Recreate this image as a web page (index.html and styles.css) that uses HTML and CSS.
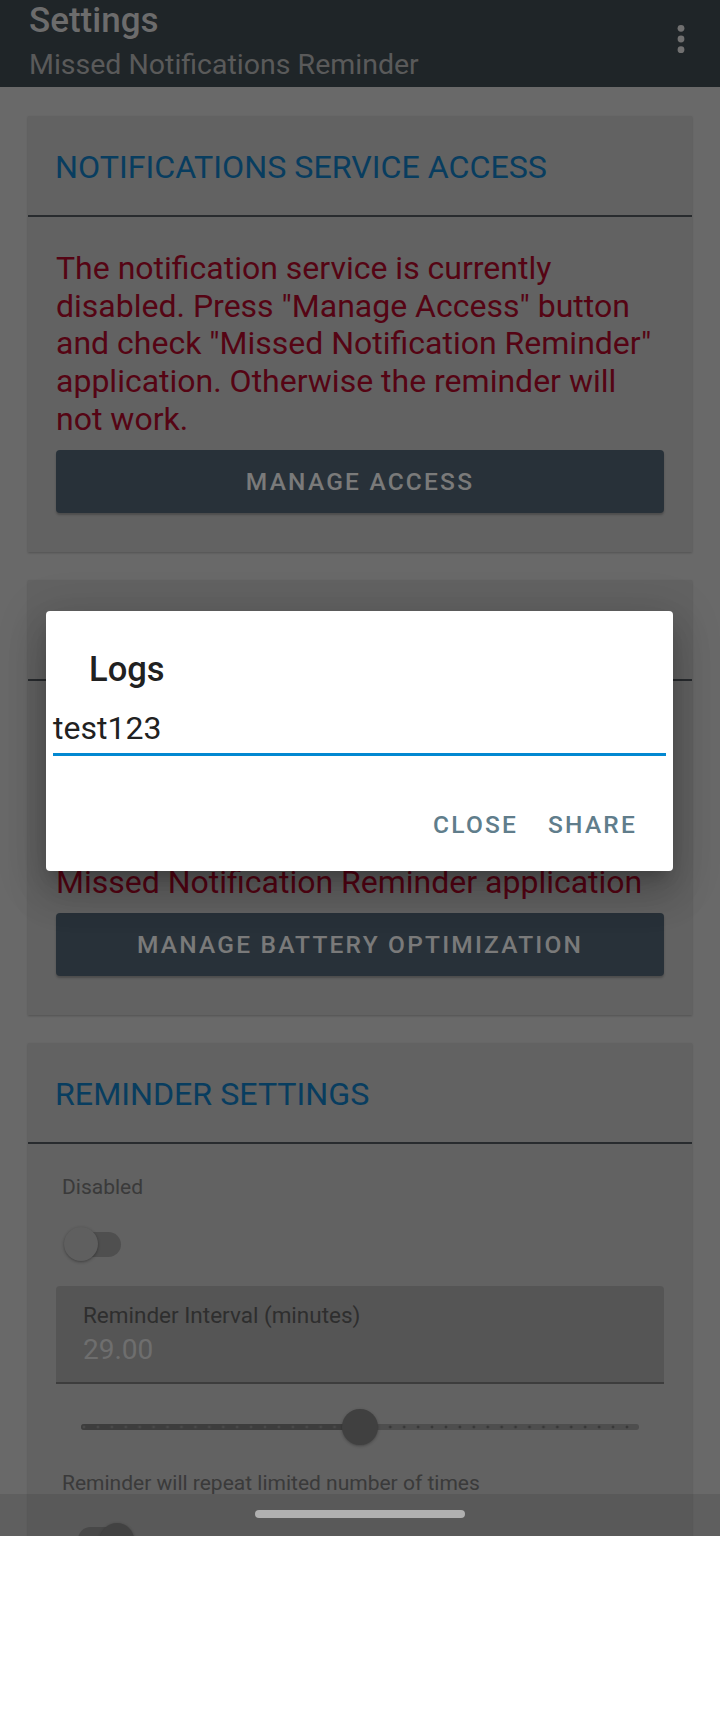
FILE: index.html
```html
<!DOCTYPE html>
<html lang="en">
<head>
<meta charset="utf-8">
<title>Settings</title>
<link rel="stylesheet" href="styles.css">
</head>
<body>
<div class="screen">
  <header class="appbar">
    <div class="appbar-text">
      <div class="appbar-title">Settings</div>
      <div class="appbar-subtitle">Missed Notifications Reminder</div>
    </div>
    <svg class="overflow" width="24" height="87" viewBox="0 0 24 87" aria-hidden="true">
      <circle cx="12" cy="28.3" r="3.4"/>
      <circle cx="12" cy="39" r="3.4"/>
      <circle cx="12" cy="49.7" r="3.4"/>
    </svg>
  </header>

  <main class="content">
    <section class="card">
      <div class="card-head"><h2 class="card-title">NOTIFICATIONS SERVICE ACCESS</h2></div>
      <div class="card-body">
        <p class="warning">The notification service is currently disabled. Press "Manage Access" button and check "Missed Notification Reminder" application. Otherwise the reminder will not work.</p>
        <button class="btn">Manage Access</button>
      </div>
    </section>

    <section class="card">
      <div class="card-head"><h2 class="card-title">BATTERY OPTIMIZATION</h2></div>
      <div class="card-body">
        <p class="warning">The battery optimization is currently<br>enabled and may stop the reminder.<br>Press "Manage Battery Optimization"<br>button and disable optimization for<br>Missed Notification Reminder application</p>
        <button class="btn">Manage Battery Optimization</button>
      </div>
    </section>

    <section class="card">
      <div class="card-head"><h2 class="card-title">REMINDER SETTINGS</h2></div>
      <div class="card-body settings">
        <div class="pref-label">Disabled</div>
        <div class="switch"><span class="track"></span><span class="thumb"></span></div>
        <div class="field">
          <div class="field-label">Reminder Interval (minutes)</div>
          <div class="field-value">29.00</div>
        </div>
        <div class="slider">
          <div class="slider-track">
            <div class="slider-fill" style="width: 50%"></div>
            <div class="slider-thumb" style="left: 50%"></div>
          </div>
        </div>
        <div class="pref-label">Reminder will repeat limited number of times</div>
        <div class="switch on"><span class="track"></span><span class="thumb"></span></div>
      </div>
    </section>
  </main>

  <div class="scrim"></div>

  <div class="dialog" role="dialog">
    <h3 class="dialog-title">Logs</h3>
    <div class="dialog-input">test123</div>
    <div class="dialog-actions">
      <button class="dlg-btn">Close</button>
      <button class="dlg-btn">Share</button>
    </div>
  </div>

  <div class="navbar"><span class="handle"></span></div>
</div>
</body>
</html>
```

FILE: styles.css
```css
* { box-sizing: border-box; }

body {
  margin: 0;
  background: #ffffff;
  font-family: Roboto, "Noto Sans", "Liberation Sans", sans-serif;
}

.screen {
  position: relative;
  width: 720px;
  height: 1536px;
  overflow: hidden;
  background: #afafaf;
}

/* App bar */
.appbar {
  height: 87px;
  background: #343e44;
  display: flex;
  justify-content: space-between;
  padding: 0 27px 0 29px;
}
.appbar-title {
  font-size: 35px;
  font-weight: 500;
  line-height: 41px;
  color: #b4b4b4;
}
.appbar-subtitle {
  margin-top: 7px;
  font-size: 28.5px;
  line-height: 33px;
  color: #969696;
}
.overflow { fill: #bbbbbb; }

/* Content */
.content {
  padding: 29px 28px 0;
  display: flex;
  flex-direction: column;
  gap: 28px;
}
.card {
  background: #a3a3a3;
  box-shadow: 0 1px 2px rgba(0, 0, 0, 0.22);
}
.card-head {
  padding: 33px 27px 29px;
  border-bottom: 2px solid #43494e;
}
.card-title {
  margin: 0;
  font-size: 32.2px;
  font-weight: 400;
  line-height: 37px;
  color: #0e669f;
}
.card-body {
  padding: 33px 28px 39px;
}
.warning {
  margin: 0;
  font-size: 32px;
  line-height: 37.7px;
  color: #8e0822;
}
.btn {
  display: block;
  width: 100%;
  height: 63px;
  margin-top: 11px;
  border: 0;
  border-radius: 4px;
  background: #43535f;
  color: #cbcbcb;
  font-family: Roboto, "Noto Sans", sans-serif;
  font-size: 24.5px;
  font-weight: 500;
  letter-spacing: 2.2px;
  text-transform: uppercase;
  box-shadow: 0 2px 2px rgba(0, 0, 0, 0.22);
}

/* Reminder settings */
.settings { padding: 31px 28px 60px; }
.pref-label {
  padding-left: 6px;
  font-size: 21px;
  line-height: 25px;
  color: #616161;
}
.slider + .pref-label { margin-top: 14px; }
.switch {
  position: relative;
  width: 72px;
  height: 34px;
  margin: 27px 0 0 8px;
}
.switch .track {
  position: absolute;
  left: 5px;
  top: 4.5px;
  width: 52px;
  height: 25px;
  border-radius: 12.5px;
  background: #848484;
}
.switch .thumb {
  position: absolute;
  left: 0;
  top: 0;
  width: 34px;
  height: 34px;
  border-radius: 50%;
  background: #9e9e9e;
  box-shadow: 0 1px 3px rgba(0, 0, 0, 0.35);
}
.switch.on .track { left: 14px; background: #858585; }
.switch.on .thumb { left: 36px; background: #7a7a7a; }

.field {
  margin-top: 25px;
  padding: 16px 27px 16px;
  background: #8e8e8e;
  border-radius: 4px 4px 0 0;
  border-bottom: 2px solid #666666;
}
.field-label {
  font-size: 22.5px;
  line-height: 26px;
  color: #4d4d4d;
}
.field-value {
  margin-top: 4.5px;
  font-size: 28px;
  line-height: 33px;
  color: #b8b8b8;
}

.slider {
  height: 60px;
  margin-top: 13px;
  padding: 0 25px;
  display: flex;
  align-items: center;
}
.slider-track {
  position: relative;
  flex: 1;
  height: 6px;
  border-radius: 3px;
  background-color: #828282;
  background-image: radial-gradient(circle, rgba(0, 0, 0, 0.28) 0 1.2px, transparent 1.7px);
  background-size: 13.925px 6px;
  background-position: -3.96px 0;
}
.slider-fill {
  position: absolute;
  left: 0;
  top: 0;
  bottom: 0;
  border-radius: 3px;
  background-color: #676767;
  background-image: radial-gradient(circle, rgba(255, 255, 255, 0.14) 0 1.2px, transparent 1.7px);
  background-size: 13.925px 6px;
  background-position: -3.96px 0;
}
.slider-thumb {
  position: absolute;
  top: 50%;
  width: 36px;
  height: 36px;
  margin: -18px 0 0 -18px;
  border-radius: 50%;
  background: #6b6b6b;
  box-shadow: 0 1px 3px rgba(0, 0, 0, 0.3);
}

/* Dialog */
.scrim {
  position: absolute;
  inset: 0;
  background: rgba(0, 0, 0, 0.4);
}
.dialog {
  position: absolute;
  left: 46px;
  top: 611px;
  width: 627px;
  padding-top: 38px;
  background: #ffffff;
  border-radius: 4px;
  box-shadow: 0 11px 15px -7px rgba(0, 0, 0, 0.2), 0 24px 38px 3px rgba(0, 0, 0, 0.14), 0 9px 46px 8px rgba(0, 0, 0, 0.12);
}
.dialog-title {
  margin: 0 0 0 43px;
  font-size: 34.5px;
  font-weight: 500;
  line-height: 40.4px;
  color: #212121;
}
.dialog-input {
  margin: 21px 7px 0;
  padding-bottom: 5.5px;
  border-bottom: 3px solid #0288d1;
  font-size: 32px;
  line-height: 37.5px;
  color: #212121;
}
.dialog-actions {
  display: flex;
  justify-content: flex-end;
  gap: 1px;
  margin-top: 37px;
  padding: 0 21.5px 15px 0;
}
.dlg-btn {
  height: 63px;
  padding: 0 14.5px;
  border: 0;
  background: none;
  font-family: Roboto, "Noto Sans", sans-serif;
  font-size: 24.5px;
  font-weight: 500;
  letter-spacing: 2.2px;
  text-transform: uppercase;
  color: #607d8b;
}

/* Navigation bar */
.navbar {
  position: absolute;
  left: 0;
  right: 0;
  bottom: 0;
  height: 42px;
  padding-top: 16px;
  display: flex;
  justify-content: center;
  background: rgba(0, 0, 0, 0.09);
}
.handle {
  width: 210px;
  height: 8px;
  border-radius: 4px;
  background: #b0b0b0;
}
```
